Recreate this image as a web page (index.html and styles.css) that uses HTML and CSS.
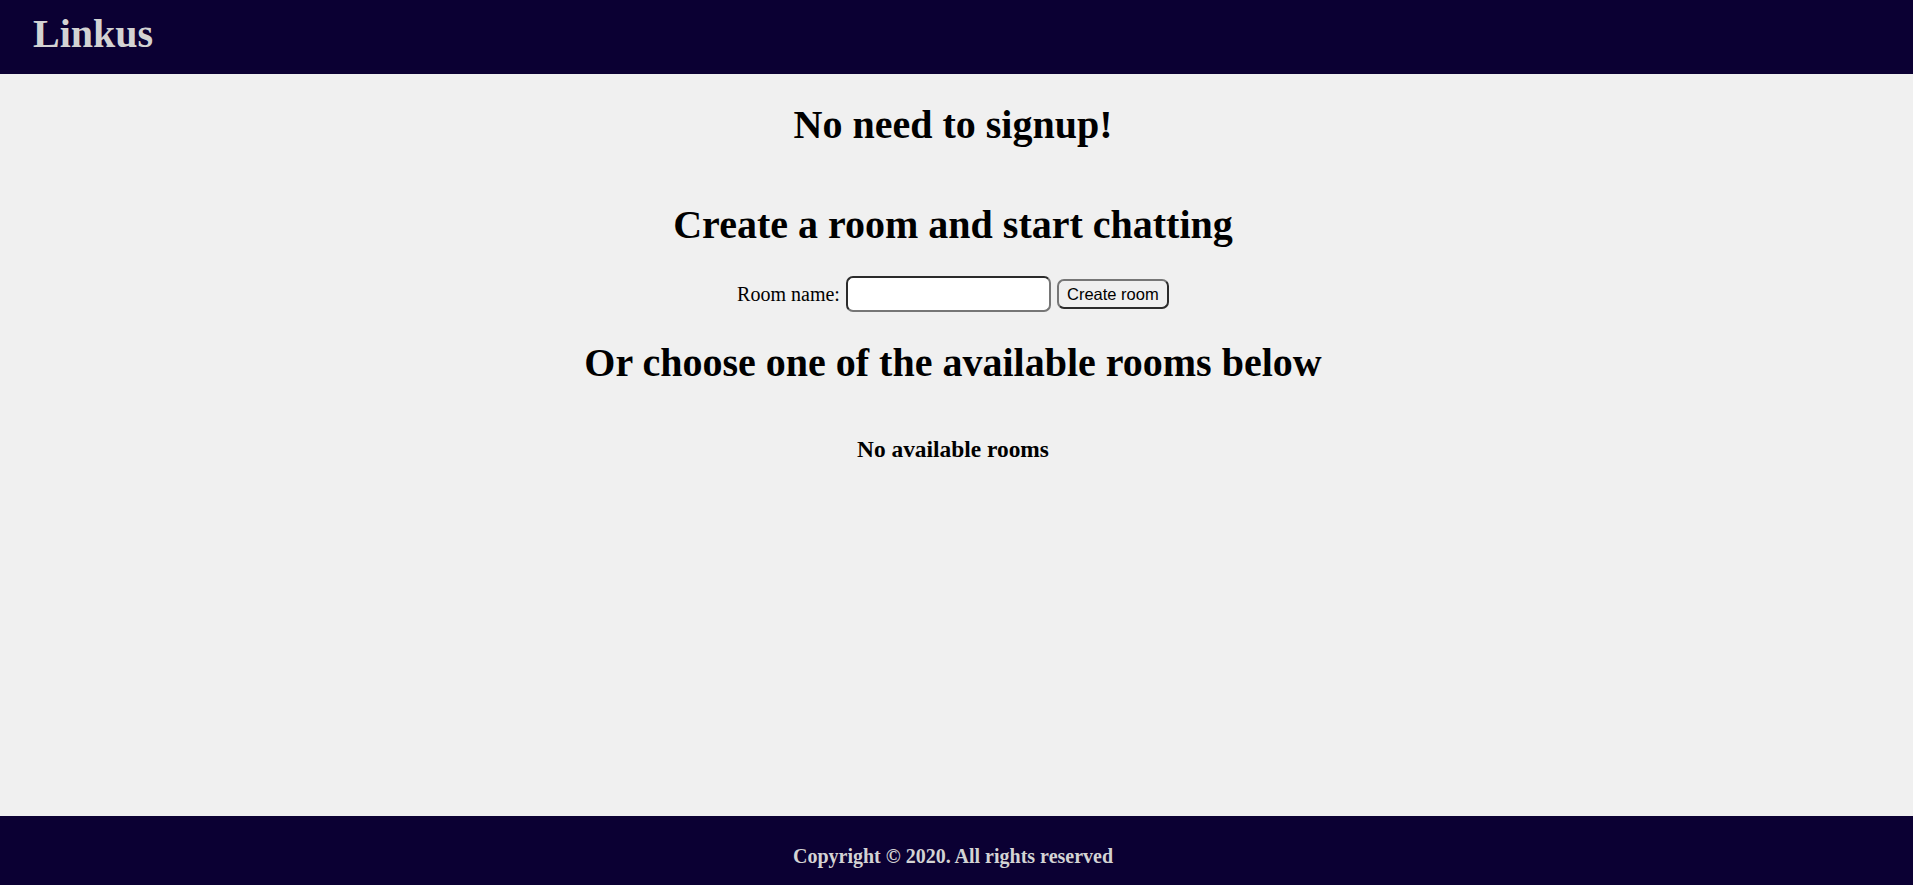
FILE: index.html
```html
<!DOCTYPE html>
<html lang="en">
<head>
<meta charset="utf-8">
<title>Linkus</title>
<link rel="stylesheet" href="styles.css">
</head>
<body>
<header class="topbar">
  <h1 class="brand">Linkus</h1>
</header>
<main class="content">
  <h1 class="title">No need to signup!</h1>
  <h1 class="title">Create a room and start chatting</h1>
  <form class="room-form">
    <label class="room-label" for="room">Room name:</label>
    <input class="room-input" id="room" type="text">
    <button class="room-btn" type="button">Create room</button>
  </form>
  <h1 class="title">Or choose one of the available rooms below</h1>
  <h3 class="empty">No available rooms</h3>
</main>
<footer class="footer">
  <p class="copy">Copyright © 2020. All rights reserved</p>
</footer>
</body>
</html>
```
FILE: styles.css
```css
html, body {
  margin: 0;
  padding: 0;
}
body {
  font-family: "Liberation Serif", "Times New Roman", serif;
  font-size: 20px;
  background: #f0f0f0;
  color: #000;
  min-height: 100vh;
  display: flex;
  flex-direction: column;
}
.topbar {
  background: #0b0033;
  height: 74px;
  box-sizing: border-box;
  padding: 10px 33px 0;
}
.brand {
  margin: 0;
  font-size: 40px;
  font-weight: bold;
  color: #d3d3d3;
  line-height: normal;
}
.content {
  flex: 1;
  display: flex;
  flex-direction: column;
  align-items: center;
  padding-right: 7px;
}
.title {
  font-size: 40px;
  font-weight: bold;
  margin: 26.8px 0;
  line-height: normal;
  text-align: center;
}
.room-form {
  display: flex;
  align-items: center;
  gap: 6px;
  padding-top: 1px;
  margin: 0;
}
.room-label {
  font-size: 20px;
}
.room-input {
  width: 205px;
  height: 36px;
  box-sizing: border-box;
  background: #fff;
  border: 2px solid;
  border-color: #2b2b2b #767676 #767676 #2b2b2b;
  border-radius: 7px;
  padding: 2px 4px;
  font-size: 16px;
  margin: 0;
}
.room-btn {
  height: 30px;
  width: 112px;
  box-sizing: border-box;
  background: #efefef;
  border: 2px solid;
  border-color: #767676 #2b2b2b #2b2b2b #767676;
  border-radius: 7px;
  font-family: "Liberation Sans", Arial, sans-serif;
  font-size: 16.5px;
  color: #000;
  padding: 0;
  margin: 0;
}
.empty {
  font-size: 23.4px;
  font-weight: bold;
  margin: 23.4px 0;
  line-height: normal;
}
.footer {
  background: #0b0033;
  height: 69px;
  box-sizing: border-box;
  padding: 29px 7px 0 0;
  text-align: center;
}
.copy {
  margin: 0;
  color: #d3d3d3;
  font-weight: bold;
  font-size: 20px;
  line-height: normal;
}
```
